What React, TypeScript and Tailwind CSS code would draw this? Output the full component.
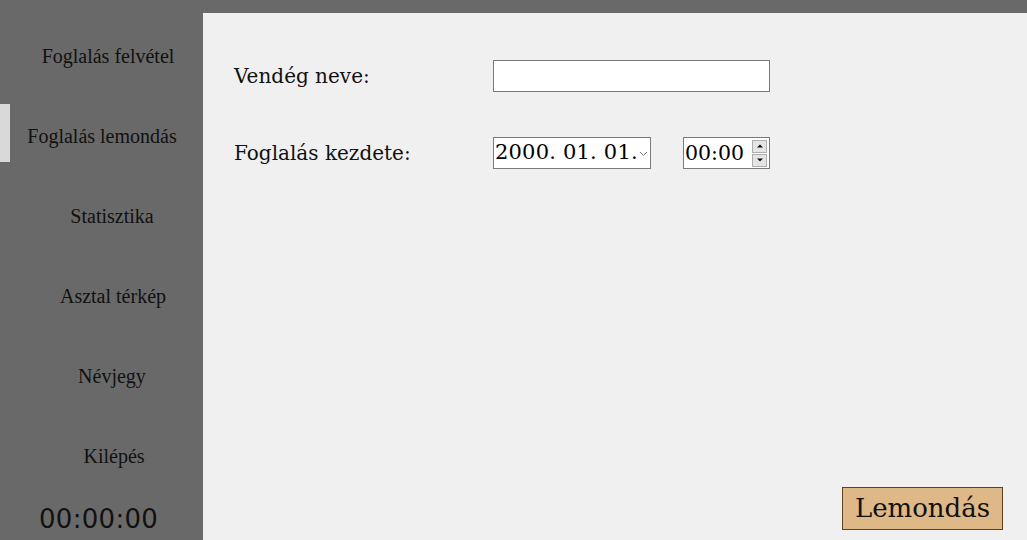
import React from "react";

const navItems = [
  { label: "Foglalás felvétel", pl: "pl-[13px]" },
  { label: "Foglalás lemondás", pl: "pl-[1px]" },
  { label: "Statisztika", pl: "pl-[21px]" },
  { label: "Asztal térkép", pl: "pl-[23px]" },
  { label: "Névjegy", pl: "pl-[21px]" },
  { label: "Kilépés", pl: "pl-[25px]" },
];

export default function App() {
  return (
    <div className="w-[1027px] h-[540px] bg-[#696969] flex overflow-hidden">
      <aside className="w-[203px] h-full flex flex-col pt-[27px] relative">
        {navItems.map((item, i) => (
          <div key={item.label} className="h-[80px] flex items-start relative">
            {i === 1 && (
              <div className="absolute left-0 top-[-3px] w-[10px] h-[58px] bg-[#d9d9d9]" />
            )}
            <div
              className={`w-full ${item.pl} h-[58px] flex items-center justify-center text-[20px] text-[#111] font-['Liberation_Serif',serif] whitespace-nowrap`}
            >
              {item.label}
            </div>
          </div>
        ))}
        <div className="absolute left-[39px] top-[500px] text-[26px] text-[#111] font-['DejaVu_Sans',sans-serif] tracking-[0.3px]">
          00:00:00
        </div>
      </aside>
      <main className="flex-1 mt-[13px] bg-[#f0f0f0] relative flex flex-col pl-[31px] pt-[47px]">
        <div className="flex items-center h-[32px]">
          <label className="w-[259px] text-[20px] text-[#111] font-['DejaVu_Serif',serif]">
            Vendég neve:
          </label>
          <div className="w-[277px] h-[32px] bg-white border border-[#7a7a7a]" />
        </div>
        <div className="flex items-center h-[32px] mt-[45px]">
          <label className="w-[259px] text-[20px] text-[#111] font-['DejaVu_Serif',serif]">
            Foglalás kezdete:
          </label>
          <div className="w-[158px] h-[32px] bg-white border border-[#7a7a7a] flex items-center pl-[1px] pr-[2px] justify-between">
            <span className="text-[21px] text-black font-['DejaVu_Serif',serif] tracking-[0.2px] whitespace-nowrap">2000. 01. 01.</span>
            <svg width="9" height="6" viewBox="0 0 9 6" className="mt-[2px] shrink-0">
              <path d="M1 1 L4.5 4.5 L8 1" fill="none" stroke="#777" strokeWidth="1" />
            </svg>
          </div>
          <div className="ml-[32px] w-[87px] h-[32px] bg-white border border-[#7a7a7a] flex items-center pl-[1px] pr-[2px] justify-between">
            <span className="text-[20.5px] text-black font-['DejaVu_Serif',serif]">00:00</span>
            <div className="flex flex-col w-[15px] h-[27px] gap-[1px]">
              <div className="flex-1 border border-[#adadad] bg-[#e5e5e5] flex items-center justify-center">
                <svg width="6" height="4" viewBox="0 0 6 4"><path d="M0 3.5 L3 0.5 L6 3.5Z" fill="#111" /></svg>
              </div>
              <div className="flex-1 border border-[#adadad] bg-[#e5e5e5] flex items-center justify-center">
                <svg width="6" height="4" viewBox="0 0 6 4"><path d="M0 0.5 L3 3.5 L6 0.5Z" fill="#111" /></svg>
              </div>
            </div>
          </div>
        </div>
        <div className="flex-1" />
        <div className="flex justify-end pr-[24px] pb-[10px]">
          <button className="w-[161px] h-[43px] bg-[#deb887] border border-[#5c4020] text-[26px] text-[#111] font-['DejaVu_Serif',serif] flex items-center justify-center">
            Lemondás
          </button>
        </div>
      </main>
    </div>
  );
}
